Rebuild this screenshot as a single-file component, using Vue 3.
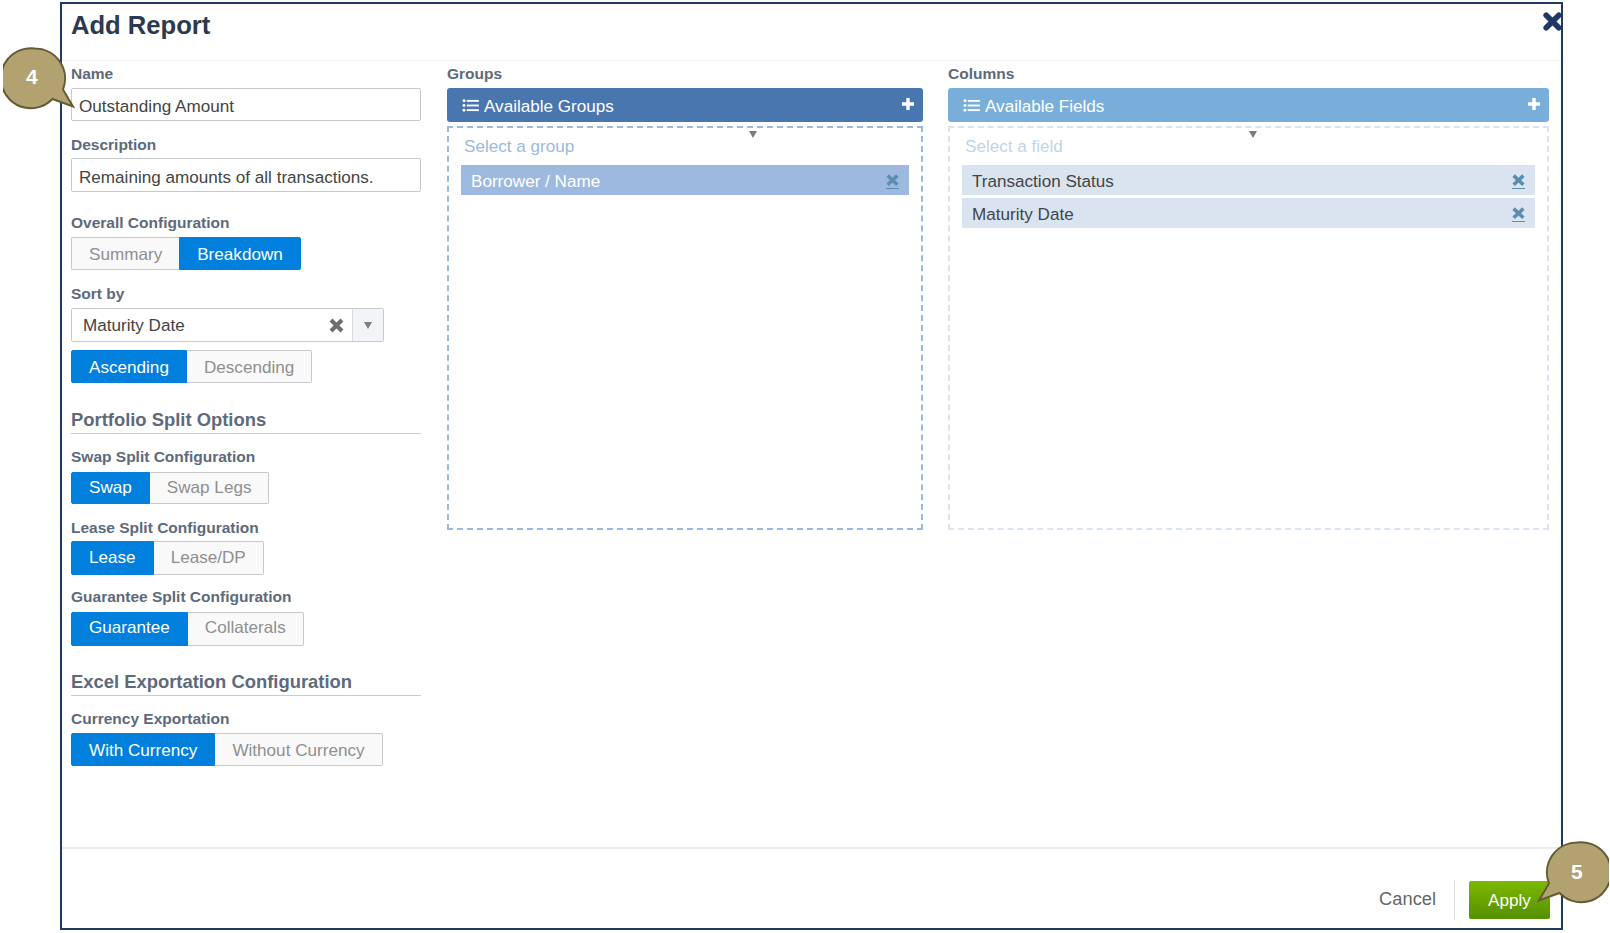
<script setup>
const splitGroups = [
  { label: 'Swap Split Configuration', on: 'Swap', off: 'Swap Legs', cls: 's1' },
  { label: 'Lease Split Configuration', on: 'Lease', off: 'Lease/DP', cls: 's2' },
  { label: 'Guarantee Split Configuration', on: 'Guarantee', off: 'Collaterals', cls: 's3' },
]
</script>

<template>
  <div class="page">
    <div class="modal">
      <header class="head">
        <h1>Add Report</h1>
        <svg class="close" viewBox="0 0 20 20"><path d="M4 4 16 16M16 4 4 16" stroke="#1f3864" stroke-width="5.4" stroke-linecap="round" /></svg>
      </header>
      <main class="body">
        <section class="left">
          <label class="lbl">Name</label>
          <div class="input i1">Outstanding Amount</div>
          <label class="lbl l2">Description</label>
          <div class="input i2">Remaining amounts of all transactions.</div>
          <label class="lbl l3">Overall Configuration</label>
          <div class="seg">
            <span class="off pad-a">Summary</span><span class="on pad-a">Breakdown</span>
          </div>
          <label class="lbl l4">Sort by</label>
          <div class="select">
            <span class="sel-text">Maturity Date</span>
            <svg class="sel-x" viewBox="0 0 14 14"><path d="M2.5 2.5 11.500 11.500M11.500 2.500 2.500 11.500" stroke="#6d6e70" stroke-width="3.400" /></svg>
            <span class="sel-arrow"><i class="tri"></i></span>
          </div>
          <div class="seg sort">
            <span class="on pad-a">Ascending</span><span class="off pad-a">Descending</span>
          </div>
          <h2 class="sec s-first">Portfolio Split Options</h2>
          <template v-for="g in splitGroups" :key="g.label">
            <label class="lbl" :class="g.cls">{{ g.label }}</label>
            <div class="seg" :class="g.cls + 'b'">
              <span class="on pad-a">{{ g.on }}</span><span class="off pad-a">{{ g.off }}</span>
            </div>
          </template>
          <h2 class="sec s-second">Excel Exportation Configuration</h2>
          <label class="lbl s1">Currency Exportation</label>
          <div class="seg">
            <span class="on pad-a">With Currency</span><span class="off pad-a">Without Currency</span>
          </div>
        </section>

        <section class="panel groups">
          <label class="lbl">Groups</label>
          <div class="bar bar-g">
            <svg class="list" viewBox="0 0 18 14"><g fill="#fff"><circle cx="2" cy="2" r="1.600" /><circle cx="2" cy="7" r="1.600" /><circle cx="2" cy="12" r="1.600" /><rect x="5" y="1" width="13" height="2" /><rect x="5" y="6" width="13" height="2" /><rect x="5" y="11" width="13" height="2" /></g></svg>
            <span>Available Groups</span>
            <svg class="plus" viewBox="0 0 14 14"><path d="M7 1V13M1 7H13" stroke="#fff" stroke-width="3.400" /></svg>
          </div>
          <div class="drop drop-g">
            <i class="tri small"></i>
            <div class="ph ph-g">Select a group</div>
            <div class="chip chip-g">
              <span class="chip-text">Borrower / Name</span>
              <span class="rm"><svg viewBox="0 0 12 12"><path d="M1.500 1.500 10.500 10M10.500 1.500 1.500 10" stroke="#5b8db0" stroke-width="3.200" /></svg></span>
            </div>
          </div>
        </section>

        <section class="panel cols">
          <label class="lbl">Columns</label>
          <div class="bar bar-c">
            <svg class="list" viewBox="0 0 18 14"><g fill="#fff"><circle cx="2" cy="2" r="1.600" /><circle cx="2" cy="7" r="1.600" /><circle cx="2" cy="12" r="1.600" /><rect x="5" y="1" width="13" height="2" /><rect x="5" y="6" width="13" height="2" /><rect x="5" y="11" width="13" height="2" /></g></svg>
            <span>Available Fields</span>
            <svg class="plus" viewBox="0 0 14 14"><path d="M7 1V13M1 7H13" stroke="#fff" stroke-width="3.400" /></svg>
          </div>
          <div class="drop drop-c">
            <i class="tri small"></i>
            <div class="ph ph-c">Select a field</div>
            <div class="chip chip-c">
              <span class="chip-text">Transaction Status</span>
              <span class="rm"><svg viewBox="0 0 12 12"><path d="M1.500 1.500 10.500 10M10.500 1.500 1.500 10" stroke="#5b8db0" stroke-width="3.200" /></svg></span>
            </div>
            <div class="chip chip-c">
              <span class="chip-text">Maturity Date</span>
              <span class="rm"><svg viewBox="0 0 12 12"><path d="M1.500 1.500 10.500 10M10.500 1.500 1.500 10" stroke="#5b8db0" stroke-width="3.200" /></svg></span>
            </div>
          </div>
        </section>
      </main>
      <footer class="foot">
        <span class="cancel">Cancel</span>
        <span class="apply">Apply</span>
      </footer>
    </div>

    <div class="callout c4">
      <svg viewBox="0 0 72 68"><path d="M32 1.500a30 30 0 0 1 28 41L70 59.500 49.500 52A30 30 0 1 1 32 1.500Z" fill="#b2a26f" stroke="#655a35" stroke-width="2" /></svg>
      <span>4</span>
    </div>
    <div class="callout c5">
      <svg viewBox="0 0 72 68"><path d="M40 1.500a30 30 0 1 1-17.500 50.500L2 59.500 12 42.500A30 30 0 0 1 40 1.500Z" fill="#b2a26f" stroke="#655a35" stroke-width="2" /></svg>
      <span>5</span>
    </div>
  </div>
</template>

<style>
html, body { margin: 0; background: #fff; }
</style>

<style scoped>
.page {
  position: relative;
  width: 1610px;
  height: 933px;
  overflow: hidden;
  background: #fff;
  font-family: "Liberation Sans", Arial, sans-serif;
  padding: 2px 47px 3px 60px;
  box-sizing: border-box;
}
.modal {
  position: relative;
  height: 100%;
  box-sizing: border-box;
  border: 2px solid #1f3864;
  display: flex;
  flex-direction: column;
}
.head {
  height: 57px;
  flex: none;
  box-sizing: border-box;
  border-bottom: 1px solid #f1f2f3;
  padding: 6px 9px;
}
h1 {
  margin: 0;
  font-size: 25.600px;
  line-height: 30px;
  font-weight: 700;
  color: #2b3a50;
}
.close {
  position: absolute;
  top: 7px;
  right: -2px;
  width: 21px;
  height: 21px;
}
.body {
  flex: 1;
  display: flex;
  padding: 4px 14px 0 9px;
  min-height: 0;
}
.left { width: 350px; flex: none; display: flex; flex-direction: column; align-items: flex-start; }
.lbl {
  display: block;
  font-size: 15.500px;
  line-height: 18px;
  font-weight: 700;
  color: #5d6a7c;
  height: 18px;
}
.input {
  width: 350px;
  box-sizing: border-box;
  border: 1px solid #c8c9cb;
  border-radius: 2px;
  font-size: 17.100px;
  color: #444;
  padding: 0 7px;
  margin-top: 5px;
}
.i1 { height: 33px; line-height: 36px; }
.i2 { height: 34px; line-height: 38px; margin-top: 4px; }
.l2 { margin-top: 15px; }
.l3 { margin-top: 22px; }
.l4 { margin-top: 15px; }
.seg { display: flex; height: 33px; margin-top: 5px; font-size: 17.120px; line-height: 33px; }
.seg span { box-sizing: border-box; }
.pad-a { padding: 0 17px; }
.on {
  background: #0080dc;
  color: #fff;
  border: 1px solid #0080dc;
  border-radius: 2px 0 0 2px;
}
.seg .on:last-child { border-radius: 0 2px 2px 0; }
.off {
  background: #f9f9f9;
  color: #8f8f8f;
  border: 1px solid #c8c9cb;
  border-left: 0;
  border-radius: 0 2px 2px 0;
}
.seg .off:first-child { border: 1px solid #c8c9cb; border-right: 0; border-radius: 2px 0 0 2px; }
.select {
  width: 313px;
  height: 34px;
  margin-top: 5px;
  box-sizing: border-box;
  border: 1px solid #c8c9cb;
  border-radius: 2px;
  display: flex;
  align-items: center;
  font-size: 17.100px;
  color: #444;
}
.sel-text { flex: 1; padding-left: 11px; padding-top: 2px; }
.sel-x { width: 17px; height: 17px; margin-right: 7px; }
.sel-arrow {
  width: 30px;
  height: 32px;
  background: #f2f4f7;
  border-left: 1px solid #d8dadc;
  display: flex;
  align-items: center;
  justify-content: center;
}
.tri {
  display: block;
  width: 0;
  height: 0;
  border-left: 4px solid transparent;
  border-right: 4px solid transparent;
  border-top: 7px solid #7d7d7d;
}
.sort { margin-top: 8px; }
.sec {
  width: 350px;
  box-sizing: border-box;
  margin: 0;
  font-size: 18.400px;
  line-height: 22px;
  height: 25px;
  font-weight: 700;
  color: #5d6a7c;
  border-bottom: 1px solid #c9cbce;
}
.s-first { margin-top: 26px; }
.s-second { margin-top: 25px; }
.lbl.s1 { margin-top: 14px; }
.lbl.s2 { margin-top: 15px; }
.lbl.s3 { margin-top: 13px; }
.s1b { margin-top: 6px; height: 32px; line-height: 30px; }
.s2b { margin-top: 4px; height: 34px; line-height: 32px; }
.s3b { margin-top: 6px; height: 34px; line-height: 30px; }
.panel { flex: none; display: flex; flex-direction: column; }
.groups { width: 476px; margin-left: 26px; }
.cols { width: 601px; margin-left: 25px; }
.bar {
  height: 34px;
  margin-top: 5px;
  border-radius: 3px;
  color: #fff;
  font-size: 17.100px;
  display: flex;
  align-items: center;
  padding: 0 8px 0 15px;
  flex: none;
}
.bar-g { background: #4a76b0; }
.bar-c { background: #7aaeda; }
.list { width: 17px; height: 13px; margin-right: 4px; }
.bar span { flex: 1; padding-top: 4px; padding-left: 1px; }
.plus { width: 14px; height: 14px; margin-top: -3px; }
.drop {
  position: relative;
  height: 404px;
  margin-top: 4px;
  box-sizing: border-box;
  padding: 0 12px;
}
.drop-g { border: 2px dashed #9db9df; }
.drop-c { border: 2px dashed #dae4f1; }
.small { position: absolute; top: 3px; }
.drop-g .small { left: 300px; }
.drop-c .small { left: 299px; }
.ph { height: 37px; padding: 8px 3px 0; box-sizing: border-box; font-size: 17.100px; line-height: 22px; }
.ph-g { color: #9db9df; }
.ph-c { color: #c1d3ea; }
.chip {
  height: 30px;
  padding: 0 10px 0 9px;
  display: flex;
  align-items: center;
  justify-content: space-between;
  font-size: 17.100px;
}
.chip-text { padding-top: 3px; padding-left: 1px; }
.chip + .chip { margin-top: 3px; }
.chip-g { background: #9db9df; color: #fff; }
.chip-c { background: #dae4f1; color: #444; }
.rm { width: 13px; height: 14px; display: block; border-bottom: 1px solid #5b8db0; margin-top: 2px; }
.rm svg { display: block; width: 13px; height: 13px; }
.foot {
  height: 81px;
  flex: none;
  box-sizing: border-box;
  border-top: 2px solid #eceded;
  position: relative;
  display: flex;
  justify-content: flex-end;
  align-items: flex-start;
  padding: 31px 11px 0 0;
}
.cancel {
  font-size: 18.300px;
  color: #666;
  height: 40px;
  line-height: 38px;
  padding-right: 18px;
  border-right: 1px solid #dedede;
  margin-right: 14px;
}
.apply {
  width: 81px;
  height: 38px;
  margin-top: 1px;
  border-radius: 2px;
  background: linear-gradient(#7cb900, #558f00);
  color: #fff;
  font-size: 17.100px;
  line-height: 40px;
  text-align: center;
}
.callout { position: absolute; width: 72px; height: 68px; }
.callout svg { display: block; width: 72px; height: 68px; }
.callout span {
  position: absolute;
  color: #fff;
  font-size: 21px;
  font-weight: 700;
  line-height: 24px;
}
.c4 { left: 3px; top: 47px; }
.c4 span { left: 23px; top: 18px; }
.c5 { left: 1537px; top: 841px; }
.c5 span { left: 34px; top: 19px; }
</style>
